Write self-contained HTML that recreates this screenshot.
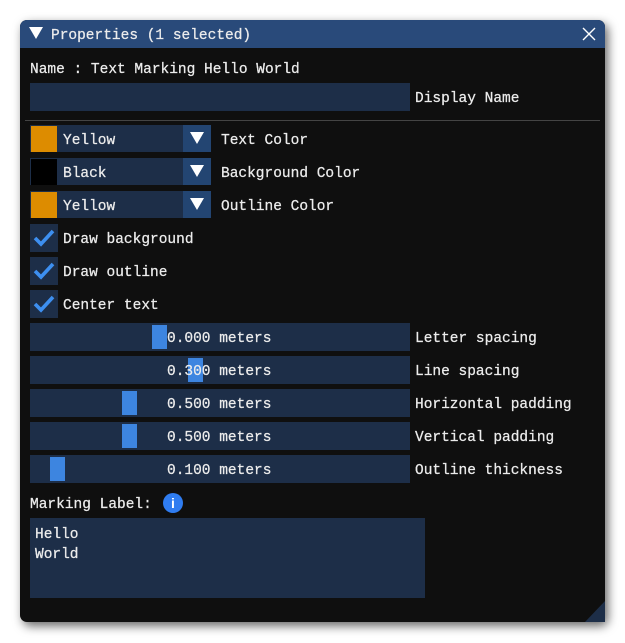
<!DOCTYPE html>
<html><head><style>
body{margin:0;width:625px;height:643px;background:#fff;position:relative;overflow:hidden;font-family:"Liberation Mono",monospace;font-size:14.5px;color:#ececec}
.win{position:absolute;left:20px;top:20px;width:585px;height:602px;background:#0f0f0f;border-radius:7px;box-shadow:3px 4px 10px rgba(0,0,0,.6);overflow:hidden}
.title{position:absolute;left:0;top:0;width:585px;height:28px;background:#294a7a}
.a{position:absolute;white-space:pre;line-height:18px;margin-top:2px;-webkit-text-stroke:0.25px #ececec}
.f{position:absolute;background:#1d2e48}
.sw{position:absolute;width:27px;height:27px}
.arr{position:absolute;background:#234572;width:28px;height:27px}
.g{position:absolute;background:#3d85e0;width:15px;height:24px}
</style></head><body>
<div class="win">
<div class="title"></div>
<svg style="position:absolute;left:9px;top:7px" width="14" height="13"><polygon points="0,0 14,0 7,12" fill="#fff"/></svg>
<div class="a" style="left:31px;top:5px">Properties (1 selected)</div>
<svg style="position:absolute;left:562px;top:7px" width="14" height="14"><path d="M1 1L13 13M13 1L1 13" stroke="#fff" stroke-width="1.4"/></svg>
</div>
<div class="a" style="left:30px;top:59px">Name : Text Marking Hello World</div>
<div class="f" style="left:30px;top:83px;width:380px;height:28px"></div>
<div class="a" style="left:415px;top:88px">Display Name</div>
<div style="position:absolute;left:25px;top:120px;width:575px;height:1px;background:#444"></div>

<div class="f" style="left:30px;top:125px;width:181px;height:27px"></div>
<div class="sw" style="left:31px;top:126px;width:26px;height:26px;background:#dd8c00"></div>
<div class="arr" style="left:183px;top:125px"></div>
<svg style="position:absolute;left:190px;top:132px" width="14" height="13"><polygon points="0,0 14,0 7,12" fill="#fff"/></svg>
<div class="a" style="left:63px;top:130px">Yellow</div>
<div class="a" style="left:221px;top:130px">Text Color</div>

<div class="f" style="left:30px;top:158px;width:181px;height:27px"></div>
<div class="sw" style="left:31px;top:159px;width:26px;height:26px;background:#000"></div>
<div class="arr" style="left:183px;top:158px"></div>
<svg style="position:absolute;left:190px;top:165px" width="14" height="13"><polygon points="0,0 14,0 7,12" fill="#fff"/></svg>
<div class="a" style="left:63px;top:163px">Black</div>
<div class="a" style="left:221px;top:163px">Background Color</div>

<div class="f" style="left:30px;top:191px;width:181px;height:27px"></div>
<div class="sw" style="left:31px;top:192px;width:26px;height:26px;background:#dd8c00"></div>
<div class="arr" style="left:183px;top:191px"></div>
<svg style="position:absolute;left:190px;top:198px" width="14" height="13"><polygon points="0,0 14,0 7,12" fill="#fff"/></svg>
<div class="a" style="left:63px;top:196px">Yellow</div>
<div class="a" style="left:221px;top:196px">Outline Color</div>

<div class="f" style="left:30px;top:224px;width:28px;height:28px"></div>
<svg style="position:absolute;left:30px;top:224px" width="28" height="28"><path d="M5 14L11 20L23 7" stroke="#3d8ff0" stroke-width="3.6" fill="none"/></svg>
<div class="a" style="left:63px;top:229px">Draw background</div>
<div class="f" style="left:30px;top:257px;width:28px;height:28px"></div>
<svg style="position:absolute;left:30px;top:257px" width="28" height="28"><path d="M5 14L11 20L23 7" stroke="#3d8ff0" stroke-width="3.6" fill="none"/></svg>
<div class="a" style="left:63px;top:262px">Draw outline</div>
<div class="f" style="left:30px;top:290px;width:28px;height:28px"></div>
<svg style="position:absolute;left:30px;top:290px" width="28" height="28"><path d="M5 14L11 20L23 7" stroke="#3d8ff0" stroke-width="3.6" fill="none"/></svg>
<div class="a" style="left:63px;top:295px">Center text</div>

<div class="f" style="left:30px;top:323px;width:380px;height:28px"></div><div class="g" style="left:152px;top:325px"></div>
<div class="a" style="left:167px;top:328px">0.000 meters</div><div class="a" style="left:415px;top:328px">Letter spacing</div>
<div class="f" style="left:30px;top:356px;width:380px;height:28px"></div><div class="g" style="left:188px;top:358px"></div>
<div class="a" style="left:167px;top:361px">0.300 meters</div><div class="a" style="left:415px;top:361px">Line spacing</div>
<div class="f" style="left:30px;top:389px;width:380px;height:28px"></div><div class="g" style="left:122px;top:391px"></div>
<div class="a" style="left:167px;top:394px">0.500 meters</div><div class="a" style="left:415px;top:394px">Horizontal padding</div>
<div class="f" style="left:30px;top:422px;width:380px;height:28px"></div><div class="g" style="left:122px;top:424px"></div>
<div class="a" style="left:167px;top:427px">0.500 meters</div><div class="a" style="left:415px;top:427px">Vertical padding</div>
<div class="f" style="left:30px;top:455px;width:380px;height:28px"></div><div class="g" style="left:50px;top:457px"></div>
<div class="a" style="left:167px;top:460px">0.100 meters</div><div class="a" style="left:415px;top:460px">Outline thickness</div>

<div class="a" style="left:30px;top:494px">Marking Label:</div>
<div style="position:absolute;left:163px;top:493px;width:20px;height:20px;border-radius:50%;background:#2f7cf0;color:#fff;font-family:'Liberation Sans',sans-serif;font-weight:bold;font-size:14px;text-align:center;line-height:20px">i</div>
<div class="f" style="left:30px;top:518px;width:395px;height:80px"></div>
<div class="a" style="left:35px;top:523px;line-height:20px">Hello
World</div>
<svg style="position:absolute;left:585px;top:601px" width="20" height="21"><polygon points="20,0 20,21 0,21" fill="#1d2e48"/></svg>
</body></html>
